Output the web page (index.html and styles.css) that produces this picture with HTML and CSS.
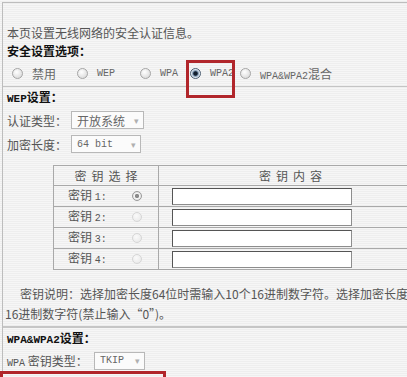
FILE: index.html
```html
<!DOCTYPE html>
<html>
<head>
    <title>无线网络安全设置</title>
    <link rel="stylesheet" href="styles.css">
</head>
<body>
    <div class="panel">
        <p class="intro">本页设置无线网络的安全认证信息。</p>
        <h3 class="title">安全设置选项：</h3>
        <div class="modes">
            <label class="opt"><span class="radio"></span><span>禁用</span></label>
            <label class="opt"><span class="radio"></span><span class="en">WEP</span></label>
            <label class="opt"><span class="radio"></span><span class="en">WPA</span></label>
            <label class="opt"><span class="radio checked"></span><span class="en">WPA2</span></label>
            <label class="opt"><span class="radio"></span><span><span class="en">WPA&amp;WPA2</span>混合</span></label>
        </div>

        <div class="section">
            <h3 class="title"><span class="en">WEP</span>设置：</h3>
            <div class="field">
                <span class="name">认证类型：</span>
                <span class="select auth">开放系统<i class="arrow">▾</i></span>
            </div>
            <div class="field">
                <span class="name">加密长度：</span>
                <span class="select bits"><span class="en">64 bit</span><i class="arrow">▾</i></span>
            </div>

            <table class="keys">
                <tr>
                    <th class="col-pick"><span class="spaced">密钥选择</span></th>
                    <th class="col-value"><span class="spaced">密钥内容</span></th>
                </tr>
                <tr>
                    <td><div class="pick"><span class="keyname">密钥 <span class="en">1:</span></span><span class="radio small on"></span></div></td>
                    <td><div class="key-input"></div></td>
                </tr>
                <tr>
                    <td><div class="pick"><span class="keyname">密钥 <span class="en">2:</span></span><span class="radio small"></span></div></td>
                    <td><div class="key-input"></div></td>
                </tr>
                <tr>
                    <td><div class="pick"><span class="keyname">密钥 <span class="en">3:</span></span><span class="radio small"></span></div></td>
                    <td><div class="key-input"></div></td>
                </tr>
                <tr>
                    <td><div class="pick"><span class="keyname">密钥 <span class="en">4:</span></span><span class="radio small"></span></div></td>
                    <td><div class="key-input"></div></td>
                </tr>
            </table>

            <p class="note">密钥说明：选择加密长度64位时需输入10个16进制数字符。选择加密长度128位时需输入26个<br>16进制数字符(禁止输入“0”)。</p>
        </div>

        <div class="section wpa">
            <h3 class="title"><span class="en">WPA&amp;WPA2</span>设置：</h3>
            <div class="field">
                <span class="name wide"><span class="en">WPA</span> 密钥类型：</span>
                <span class="select tkip"><span class="en">TKIP</span><i class="arrow">▾</i></span>
            </div>
        </div>
    </div>

    <div class="mark mark-wpa2"></div>
    <div class="mark mark-type"></div>
</body>
</html>
```

FILE: styles.css
```css
* {
    margin: 0;
    padding: 0;
    box-sizing: border-box;
}

body {
    height: 377px;
    overflow: hidden;
    position: relative;
    font-family: "Noto Sans CJK SC", sans-serif;
    font-size: 12px;
    color: #555;
    background: repeating-linear-gradient(#f6f6f6 0, #f6f6f6 1px, #eeeeee 1px, #eeeeee 2px);
}

.en {
    font-family: "Liberation Mono", monospace;
    font-size: 10px;
}

.panel {
    margin: 2px 0 0 2px;
    width: 600px;
    height: 400px;
    border-top: 1px solid #bdbdbd;
    border-left: 1px solid #bdbdbd;
}

.intro {
    margin-top: 21px;
    padding-left: 4px;
    line-height: 18px;
}

.title {
    padding-left: 4px;
    line-height: 18px;
    font-size: 12px;
    font-weight: bold;
    color: #111;
}

.title .en {
    font-size: 11px;
    font-weight: bold;
}

/* security mode radios */
.modes {
    display: grid;
    grid-template-columns: 65px 63px 50px 50px auto;
    align-items: center;
    height: 27px;
    padding-left: 9px;
    border-bottom: 1px solid #c4c4c4;
    color: #666;
}

.opt {
    display: flex;
    align-items: center;
    gap: 9px;
}

.radio {
    display: inline-block;
    width: 11px;
    height: 11px;
    border-radius: 50%;
    border: 1px solid #a5a5a5;
    background: radial-gradient(circle at 40% 35%, #ffffff, #d2d2d2);
}

.radio.checked {
    border-color: #4d5f72;
    background: radial-gradient(circle, #13202e 0, #13202e 28%, #6f8aa6 40%, #e6eef5 65%, #9aa8b6 100%);
}

.radio.small {
    width: 10px;
    height: 10px;
    border-color: #d6d6d6;
    background: radial-gradient(circle at 40% 35%, #fafafa, #e6e6e6);
}

.radio.small.on {
    border-color: #9a9a9a;
    background: radial-gradient(circle, #8a8a8a 0, #8a8a8a 30%, #f4f4f4 45%, #cfcfcf 100%);
}

/* wep settings */
.section {
    padding-top: 1px;
}

.field {
    display: flex;
    align-items: center;
    height: 24px;
    padding-left: 4px;
}

.name {
    width: 64px;
}

.name.wide {
    width: 87px;
}

.select {
    display: flex;
    align-items: center;
    justify-content: space-between;
    height: 18px;
    padding: 0 4px 0 5px;
    border: 1px solid #b8b8b8;
    background: #fbfbfb;
    color: #666;
}

.select.auth {
    width: 73px;
}

.select.bits {
    width: 70px;
}

.select.tkip {
    width: 51px;
}

.arrow {
    font-style: normal;
    font-size: 9px;
    color: #b0b0b0;
}

.keys {
    margin: 9px 0 0 50px;
    width: 370px;
    border-collapse: collapse;
}

.keys th,
.keys td {
    border: 1px solid #a9a9a9;
    padding: 0;
    line-height: 16px;
}

.keys th {
    height: 20px;
    font-weight: normal;
    color: #555;
}

.keys td {
    height: 21px;
}

.col-pick {
    width: 105px;
}

.spaced {
    letter-spacing: 5px;
    padding-left: 5px;
}

.pick {
    display: flex;
    align-items: center;
    padding-left: 14px;
}

.keyname {
    width: 64px;
}

.key-input {
    width: 180px;
    height: 17px;
    margin-left: 13px;
    background: #fff;
    border: 1px solid;
    border-color: #555 #8d8d8d #8d8d8d #555;
}

.note {
    margin-top: 14px;
    padding-left: 2px;
    text-indent: 15px;
    line-height: 20px;
    white-space: nowrap;
    padding-bottom: 2px;
    border-bottom: 2px solid #c6c6c6;
}

.wpa .field {
    height: 23px;
}

/* red annotation boxes drawn over the screenshot */
.mark {
    position: absolute;
    border: 3px solid #b1262b;
}

.mark-wpa2 {
    left: 186px;
    top: 60px;
    width: 49px;
    height: 38px;
}

.mark-type {
    left: 0;
    top: 371px;
    width: 166px;
    height: 40px;
}
```
